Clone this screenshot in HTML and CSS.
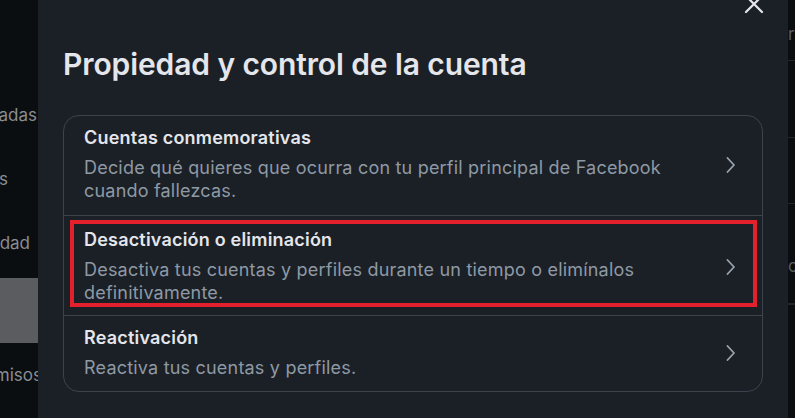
FILE: index.html
```html
<!DOCTYPE html>
<html lang="es">
<head>
  <meta charset="UTF-8" />
  <title>Propiedad y control de la cuenta</title>
  <link rel="stylesheet" href="styles.css">
</head>
<body>

  <nav class="sidebar">
    <div class="nav-item">Cuentas vinculadas</div>
    <div class="nav-item nav-item--far">Anuncios</div>
    <div class="nav-item nav-item--short">Privacidad</div>
    <div class="nav-item nav-item--active"></div>
    <div class="nav-item nav-item--clip">Permisos</div>
  </nav>

  <div class="modal">
    <button class="close-button" aria-label="Cerrar">
      <svg width="20" height="20" viewBox="0 0 20 20">
        <path d="M2 2 L18 18 M18 2 L2 18" stroke="#e4e6eb" stroke-width="2.2" stroke-linecap="round" />
      </svg>
    </button>

    <h1 class="modal-title">Propiedad y control de la cuenta</h1>

    <div class="card">
      <a class="card-row" href="#">
        <div class="row-text">
          <div class="row-title">Cuentas conmemorativas</div>
          <div class="row-desc">Decide qué quieres que ocurra con tu perfil principal de Facebook cuando fallezcas.</div>
        </div>
        <svg class="chevron" width="10" height="16" viewBox="0 0 10 16">
          <path d="M1.5 1 L8 8 L1.5 15" fill="none" stroke="currentColor" stroke-width="1.8" stroke-linecap="round" stroke-linejoin="round" />
        </svg>
      </a>
      <a class="card-row card-row--marked" href="#">
        <div class="row-text">
          <div class="row-title">Desactivación o eliminación</div>
          <div class="row-desc">Desactiva tus cuentas y perfiles durante un tiempo o elimínalos definitivamente.</div>
        </div>
        <svg class="chevron" width="10" height="16" viewBox="0 0 10 16">
          <path d="M1.5 1 L8 8 L1.5 15" fill="none" stroke="currentColor" stroke-width="1.8" stroke-linecap="round" stroke-linejoin="round" />
        </svg>
      </a>
      <a class="card-row card-row--last" href="#">
        <div class="row-text">
          <div class="row-title">Reactivación</div>
          <div class="row-desc">Reactiva tus cuentas y perfiles.</div>
        </div>
        <svg class="chevron" width="10" height="16" viewBox="0 0 10 16">
          <path d="M1.5 1 L8 8 L1.5 15" fill="none" stroke="currentColor" stroke-width="1.8" stroke-linecap="round" stroke-linejoin="round" />
        </svg>
      </a>
    </div>
  </div>

  <div class="backdrop-strip">
    <div class="strip-row strip-row--top">r</div>
    <div class="strip-row strip-row--mid"></div>
    <div class="strip-row strip-row--short"></div>
    <div class="strip-row strip-row--tall">c</div>
    <div class="strip-row"></div>
  </div>

</body>
</html>
```

FILE: styles.css
```css
body {
  margin: 0;
  padding: 0;
  height: 418px;
  overflow: hidden;
  display: flex;
  background: #0b0e11;
  font-family: Inter, "Noto Sans", sans-serif;
  color: #e4e6eb;
}

/* page behind the dialog, only its right edge shows */
.sidebar {
  width: 38px;
  flex-shrink: 0;
  overflow: hidden;
  padding-top: 83px;
  display: flex;
  flex-direction: column;
}

.nav-item {
  height: 64px;
  display: flex;
  align-items: center;
  justify-content: flex-end;
  white-space: nowrap;
  font-size: 17px;
  color: #8a8d91;
  padding-right: 1px;
}

.nav-item--far {
  padding-right: 30px;
}

.nav-item--short {
  padding-right: 8px;
}

.nav-item--active {
  background: #5b5c5f;
  height: 65px;
  margin-top: 3px;
}

.nav-item--clip {
  margin-right: -5px;
}

.modal {
  flex: 1;
  position: relative;
  background: #1b2027;
  padding: 0 25px;
}

.close-button {
  position: absolute;
  top: -6px;
  right: 24px;
  background: none;
  border: none;
  padding: 0;
  cursor: pointer;
}

.modal-title {
  margin: 44px 0 31px;
  font-size: 30px;
  line-height: 40px;
  font-weight: 600;
  letter-spacing: -0.1px;
}

.card {
  width: 698px;
  border: 1px solid #3b434d;
  border-radius: 16px;
}

.card-row {
  position: relative;
  display: flex;
  align-items: center;
  gap: 20px;
  padding: 11px 26px 13px 20px;
  text-decoration: none;
  color: inherit;
  border-top: 1px solid #3b434d;
}

.card-row:first-child {
  border-top: none;
}

.card-row--marked {
  padding-top: 13px;
  padding-bottom: 11px;
}

/* red frame drawn round the highlighted option */
.card-row--marked::after {
  content: "";
  position: absolute;
  top: 4px;
  right: 5px;
  bottom: 8px;
  left: 6px;
  border: 4px solid #e3202b;
}

.card-row--last {
  padding-bottom: 12px;
}

.row-text {
  flex: 1;
}

.row-title {
  font-size: 18px;
  line-height: 22px;
  font-weight: 600;
  letter-spacing: 0.2px;
  margin-bottom: 7px;
}

.row-desc {
  font-size: 18px;
  line-height: 23px;
  letter-spacing: 0.2px;
  color: #8e99a4;
}

.chevron {
  color: #9aa4ae;
  flex-shrink: 0;
}

.backdrop-strip {
  width: 7px;
  flex-shrink: 0;
  overflow: hidden;
  color: #5a5e63;
  font-size: 17px;
}

.strip-row {
  border-bottom: 1px solid #22272d;
}

.strip-row--top {
  height: 60px;
  line-height: 68px;
}

.strip-row--mid {
  height: 76px;
}

.strip-row--short {
  height: 65px;
}

.strip-row--tall {
  height: 99px;
  line-height: 124px;
}
```
